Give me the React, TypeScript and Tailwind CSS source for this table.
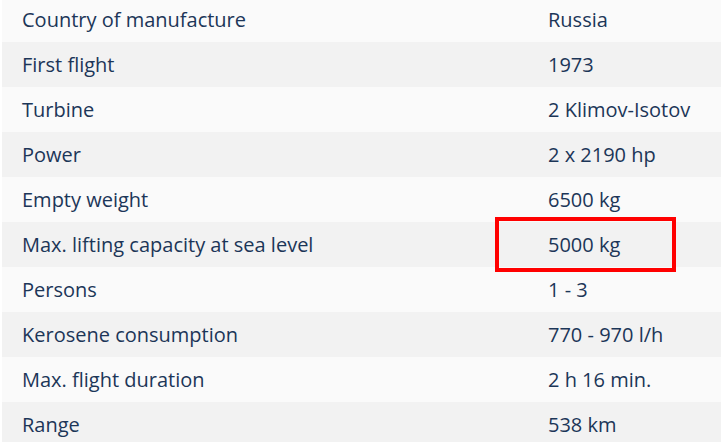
const specs = [
  { label: 'Country of manufacture', value: 'Russia' },
  { label: 'First flight', value: '1973' },
  { label: 'Turbine', value: '2 Klimov-Isotov' },
  { label: 'Power', value: '2 x 2190 hp' },
  { label: 'Empty weight', value: '6500 kg' },
  { label: 'Max. lifting capacity at sea level', value: '5000 kg', highlight: true },
  { label: 'Persons', value: '1 - 3' },
  { label: 'Kerosene consumption', value: '770 - 970 l/h' },
  { label: 'Max. flight duration', value: '2 h 16 min.' },
  { label: 'Range', value: '538 km' },
]

export default function App() {
  return (
    <div className="h-[442px] w-[721px] overflow-hidden bg-white pl-[2px]">
      <div className="-mt-[3px] flex flex-col font-['Open_Sans',sans-serif] text-[20px] text-[#1c3658]">
        {specs.map((row, i) => (
          <div
            key={row.label}
            className={`relative flex h-[45px] shrink-0 items-center pt-[1px] ${i % 2 === 0 ? 'bg-[#fafafa]' : 'bg-[#f2f2f2]'}`}
          >
            <div className="w-[526px] pl-[20px]">{row.label}</div>
            <div className="flex-1 pl-[20px]">{row.value}</div>
            {row.highlight && (
              <div className="absolute left-[493px] top-[-5px] z-10 h-[55px] w-[181px] border-4 border-[#ff0000]" />
            )}
          </div>
        ))}
      </div>
    </div>
  )
}
